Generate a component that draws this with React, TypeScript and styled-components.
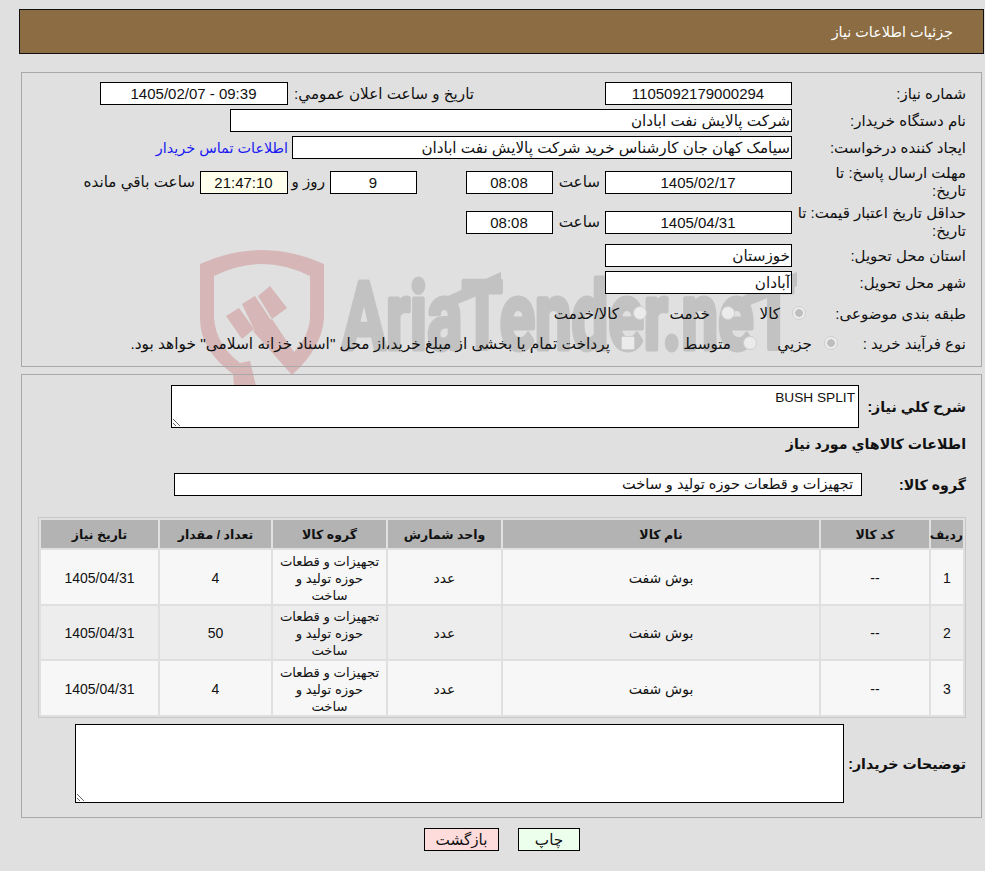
import React from "react";
import styled, { createGlobalStyle } from "styled-components";

const Global = createGlobalStyle`
  html, body { margin: 0; padding: 0; background: #e0e0e0; }
  body { font-family: "Liberation Sans", "DejaVu Sans", sans-serif; font-size: 15px; color: #111; }
`;

const Page = styled.div`
  position: relative;
  width: 985px;
  height: 871px;
  overflow: hidden;
  direction: rtl;
  background: #e0e0e0;
`;

const Watermark = styled.svg`
  position: absolute;
  left: 190px;
  top: 240px;
  z-index: 0;
`;

const Content = styled.div`
  position: relative;
  z-index: 1;
  padding-top: 9px;
`;

const Header = styled.div`
  box-sizing: border-box;
  height: 45px;
  margin: 0 1px 0 19px;
  padding-right: 30px;
  display: flex;
  align-items: center;
  background: #8c6c42;
  border: 1px solid #111;
  color: #fff;
  font-size: 14.4px;
`;

const Panel = styled.section<{ $h: number; $mt: number; $pt: number }>`
  box-sizing: border-box;
  height: ${(p) => p.$h}px;
  margin: ${(p) => p.$mt}px 3px 0 21px;
  padding: ${(p) => p.$pt}px 15px 0 0;
  border: 1px solid #a8a8a8;
`;

const Row = styled.div<{ $h?: number; $mt?: number }>`
  display: flex;
  align-items: center;
  height: ${(p) => p.$h ?? 23}px;
  margin-top: ${(p) => p.$mt ?? 4}px;
  &:first-child { margin-top: 0; }
`;

const Label = styled.div<{ $w?: number; $bold?: boolean }>`
  box-sizing: border-box;
  flex: none;
  width: ${(p) => p.$w ?? 174}px;
  font-size: ${(p) => (p.$bold ? 14.2 : 15)}px;
  font-weight: ${(p) => (p.$bold ? 700 : 400)};
  line-height: 18px;
  white-space: nowrap;
`;

const Box = styled.div<{ $w: number; $center?: boolean; $bg?: string; $pr?: number; $mr?: number; $fs?: number }>`
  box-sizing: border-box;
  flex: none;
  width: ${(p) => p.$w}px;
  height: 23px;
  margin-right: ${(p) => p.$mr ?? 0}px;
  line-height: 21px;
  background: ${(p) => p.$bg ?? "#fff"};
  border: 1px solid #000;
  padding-right: ${(p) => p.$pr ?? 1}px;
  text-align: ${(p) => (p.$center ? "center" : "right")};
  font-size: ${(p) => p.$fs ?? 15.2}px;
  white-space: nowrap;
  overflow: hidden;
`;

const Note = styled.div<{ $mr?: number; $w?: number }>`
  flex: none;
  margin-right: ${(p) => p.$mr ?? 0}px;
  width: ${(p) => (p.$w ? `${p.$w}px` : "auto")};
  font-size: 15.2px;
  white-space: nowrap;
`;

const BuyerLink = styled.a`
  margin-right: 4px;
  color: #1a1af0;
  font-size: 14.4px;
  white-space: nowrap;
  text-decoration: none;
`;

const Option = styled.label<{ $w?: number; $gap: number; $fs?: number }>`
  flex: none;
  display: flex;
  align-items: center;
  gap: ${(p) => p.$gap}px;
  width: ${(p) => (p.$w ? `${p.$w}px` : "auto")};
  font-size: ${(p) => p.$fs ?? 15.2}px;
  white-space: nowrap;
`;

const Radio = styled.input`
  appearance: none;
  flex: none;
  box-sizing: border-box;
  width: 14px;
  height: 14px;
  margin: 0 0 2px;
  border: 1px solid #cfcfcf;
  border-radius: 50%;
  background: #ebebeb;
  &:checked { background: radial-gradient(circle, #bdbdbd 0 3.5px, #ebebeb 4px); }
`;

const Check = styled.input`
  appearance: none;
  flex: none;
  box-sizing: border-box;
  width: 14px;
  height: 14px;
  margin: 0 0 2px;
  border: 1px solid #cfcfcf;
  border-radius: 2px;
  background: #ebebeb;
`;

const Area = styled.textarea<{ $w: number; $h: number }>`
  box-sizing: border-box;
  flex: none;
  display: block;
  width: ${(p) => p.$w}px;
  height: ${(p) => p.$h}px;
  margin: 0;
  padding: 4px 3px 2px;
  border: 1px solid #000;
  border-radius: 0;
  outline: none;
  background: #fff;
  color: #111;
  font-family: "Liberation Sans", "DejaVu Sans", sans-serif;
  font-size: 13.7px;
`;

const Heading = styled.h2`
  height: 20px;
  margin: 6px 0 0;
  font-size: 14.2px;
  font-weight: 700;
  line-height: 20px;
`;

const TableFrame = styled.table`
  box-sizing: border-box;
  width: 928px;
  height: 201px;
  margin-top: 21px;
  table-layout: fixed;
  border: 1px solid #c8c8c8;
  border-collapse: separate;
  border-spacing: 2px;
`;

const HeadCell = styled.th`
  height: 28px;
  padding: 0;
  background: #b3b3b3;
  font-size: 12.5px;
  font-weight: 700;
  text-align: center;
`;

const BodyRow = styled.tr<{ $alt?: boolean; $h: number }>`
  height: ${(p) => p.$h}px;
  background: ${(p) => (p.$alt ? "#ededed" : "#f7f7f7")};
`;

const Cell = styled.td<{ $fs?: number }>`
  padding: 2px 0 0;
  text-align: center;
  line-height: 17px;
  font-size: ${(p) => p.$fs ?? 14}px;
`;

const Footer = styled.div`
  display: flex;
  gap: 19px;
  margin-top: 10px;
  padding-right: 405px;
`;

const Action = styled.button<{ $bg: string; $w: number }>`
  box-sizing: border-box;
  width: ${(p) => p.$w}px;
  height: 23px;
  padding: 0;
  background: ${(p) => p.$bg};
  border: 1px solid #000;
  border-radius: 0;
  color: #111;
  font-family: "Liberation Sans", "DejaVu Sans", sans-serif;
  font-size: 15.2px;
`;

const columns: [string, number][] = [
  ["رديف", 32],
  ["کد کالا", 108],
  ["نام کالا", 316],
  ["واحد شمارش", 113],
  ["گروه کالا", 113],
  ["تعداد / مقدار", 111],
  ["تاریخ نیاز", 117],
];

const rows = [
  { n: "1", qty: "4", h: 54 },
  { n: "2", qty: "50", h: 53 },
  { n: "3", qty: "4", h: 54 },
];

export default function App() {
  return (
    <Page>
      <Global />
      <Watermark width="620" height="150" viewBox="190 240 620 150">
        <path
          fill="#d6b6b6"
          d="M200 264 Q262 236 324 264 L324 318 Q322 348 292 375 L253 331 L272 319 L294 352 Q310 335 310 316 L310 276 Q262 252 214 276 L214 318 Q216 345 240 363 L250 361 L256 386 L234 386 L233 374 Q200 350 200 318 Z"
        />
        <path fill="#d6b6b6" d="M270 286 L287 308 L272 319 L258 296 Z M242 304 L255 296 L271 320 L255 331 Z M226 316 L239 308 L254 329 L242 339 Z" />
        <path fill="#c2c2c2" d="M448 296 L501 272 L501 286 L448 308 Z M743 296 L797 272 L797 286 L743 308 Z" />
        <text
          x="342"
          y="349"
          fontFamily="Roboto, sans-serif"
          fontWeight="700"
          fontSize="94"
          fill="#c2c2c2"
          stroke="#c2c2c2"
          strokeWidth="5"
          strokeLinejoin="round"
          textLength="452"
          lengthAdjust="spacingAndGlyphs"
          direction="ltr"
        >
          AriaTender.neT
        </text>
      </Watermark>
      <Content>
        <Header>جزئیات اطلاعات نیاز</Header>

        <Panel $h={295} $mt={18} $pt={9}>
          <Row>
            <Label>شماره نیاز:</Label>
            <Box $w={187} $center $fs={15}>1105092179000294</Box>
            <Note $mr={131} $w={186}>تاریخ و ساعت اعلان عمومي:</Note>
            <Box $w={188} $center $fs={15}>09:39 - 1405/02/07</Box>
          </Row>
          <Row>
            <Label>نام دستگاه خریدار:</Label>
            <Box $w={562}>شرکت پالایش نفت ابادان</Box>
          </Row>
          <Row>
            <Label>ایجاد کننده درخواست:</Label>
            <Box $w={500}>سیامک کهان جان کارشناس خرید شرکت پالایش نفت ابادان</Box>
            <BuyerLink href="#">اطلاعات تماس خریدار</BuyerLink>
          </Row>
          <Row $h={36} $mt={5}>
            <Label>مهلت ارسال پاسخ: تا<br />تاریخ:</Label>
            <Box $w={187} $center $fs={15}>1405/02/17</Box>
            <Note $mr={5} $w={47}>ساعت</Note>
            <Box $w={87} $center $fs={15}>08:08</Box>
            <Box $w={87} $center $fs={15} $mr={49}>9</Box>
            <Note $mr={5} $w={37}>روز و</Note>
            <Box $w={88} $center $fs={15} $bg="#ffffee">21:47:10</Box>
            <Note $mr={5}>ساعت باقي مانده</Note>
          </Row>
          <Row $h={36}>
            <Label>حداقل تاریخ اعتبار قیمت: تا<br />تاریخ:</Label>
            <Box $w={187} $center $fs={15}>1405/04/31</Box>
            <Note $mr={5} $w={47}>ساعت</Note>
            <Box $w={87} $center $fs={15}>08:08</Box>
          </Row>
          <Row>
            <Label>استان محل تحویل:</Label>
            <Box $w={187}>خوزستان</Box>
          </Row>
          <Row>
            <Label>شهر محل تحویل:</Label>
            <Box $w={187}>آبادان</Box>
          </Row>
          <Row $h={26} $mt={7}>
            <Label $w={160}>طبقه بندی موضوعی:</Label>
            <Option $w={71} $gap={12}><Radio type="radio" name="cat" defaultChecked disabled />کالا</Option>
            <Option $w={88} $gap={11}><Radio type="radio" name="cat" disabled />خدمت</Option>
            <Option $gap={14}><Radio type="radio" name="cat" disabled />کالا/خدمت</Option>
          </Row>
          <Row $h={26}>
            <Label $w={128}>نوع فرآیند خرید :</Label>
            <Option $w={81} $gap={12}><Radio type="radio" name="kind" defaultChecked disabled />جزيي</Option>
            <Option $w={122} $gap={12}><Radio type="radio" name="kind" disabled />متوسط</Option>
            <Option $gap={11} $fs={15.4}><Check type="checkbox" disabled />پرداخت تمام یا بخشی از مبلغ خرید،از محل "اسناد خزانه اسلامی" خواهد بود.</Option>
          </Row>
        </Panel>

        <Panel $h={444} $mt={7} $pt={10}>
          <Row $h={43}>
            <Label $w={107} $bold>شرح کلي نياز:</Label>
            <Area $w={688} $h={43} readOnly dir="rtl" defaultValue="BUSH SPLIT" />
          </Row>
          <Heading>اطلاعات کالاهاي مورد نياز</Heading>
          <Row $mt={19}>
            <Label $w={104} $bold>گروه کالا:</Label>
            <Box $w={688} $pr={8} $fs={14.5}>تجهیزات و قطعات حوزه تولید و ساخت</Box>
          </Row>
          <TableFrame>
            <colgroup>
              {columns.map(([t, w]) => <col key={t} width={w} />)}
            </colgroup>
            <thead>
              <tr>{columns.map(([t]) => <HeadCell key={t}>{t}</HeadCell>)}</tr>
            </thead>
            <tbody>
              {rows.map((r, i) => (
                <BodyRow key={r.n} $alt={i === 1} $h={r.h}>
                  <Cell>{r.n}</Cell>
                  <Cell>--</Cell>
                  <Cell>بوش شفت</Cell>
                  <Cell>عدد</Cell>
                  <Cell $fs={13.2}>تجهیزات و قطعات<br />حوزه تولید و<br />ساخت</Cell>
                  <Cell>{r.qty}</Cell>
                  <Cell>1405/04/31</Cell>
                </BodyRow>
              ))}
            </tbody>
          </TableFrame>
          <Row $h={79} $mt={6}>
            <Label $w={122} $bold>توضیحات خریدار:</Label>
            <Area $w={769} $h={79} readOnly dir="rtl" />
          </Row>
        </Panel>

        <Footer>
          <Action $bg="#ecffec" $w={62}>چاپ</Action>
          <Action $bg="#ffdcdc" $w={75}>بازگشت</Action>
        </Footer>
      </Content>
    </Page>
  );
}
